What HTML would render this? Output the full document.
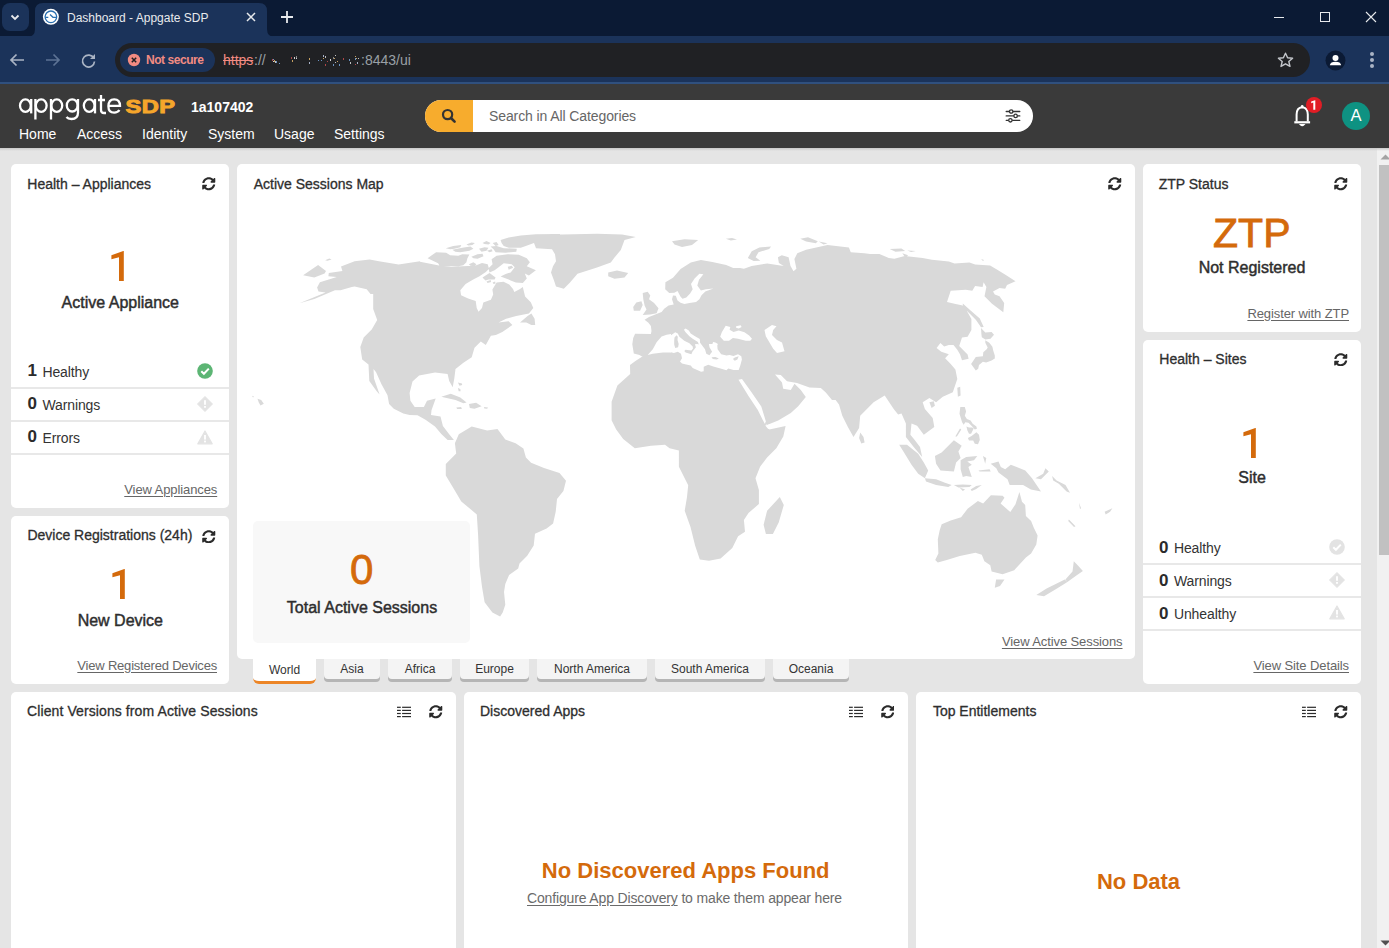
<!DOCTYPE html>
<html><head><meta charset="utf-8">
<style>
*{margin:0;padding:0;box-sizing:border-box}
html,body{width:1389px;height:948px;overflow:hidden;background:#e5e5e5;font-family:"Liberation Sans",sans-serif;position:relative}
.a{position:absolute}
.t{position:absolute;white-space:nowrap;line-height:1}
.card{position:absolute;background:#fff;border-radius:5px}
.ttl{position:absolute;white-space:nowrap;line-height:1;font-size:14px;color:#2e2e2e;-webkit-text-stroke:0.3px #2e2e2e}
.big{position:absolute;white-space:nowrap;line-height:1;color:#d46a0b;text-align:center;-webkit-text-stroke:0.8px #d46a0b}
.sub{position:absolute;white-space:nowrap;line-height:1;color:#2e2e2e;text-align:center;font-size:16px;-webkit-text-stroke:0.45px #2e2e2e}
.lnk{position:absolute;white-space:nowrap;line-height:1;font-size:13px;color:#666;text-decoration:underline;text-underline-offset:2px;letter-spacing:-0.1px}
.sep{position:absolute;height:2px;background:#e8e8e8}
.num{position:absolute;white-space:nowrap;line-height:1;font-size:17px;font-weight:bold;color:#2b2b2b}
.lbl{position:absolute;white-space:nowrap;line-height:1;font-size:14px;color:#333;letter-spacing:-0.1px}
.tab{position:absolute;top:659px;height:20px;background:#f4f4f4;border-radius:0 0 4px 4px;box-shadow:0 3px 0 #b5b5b5;font-size:12px;color:#333;text-align:center;line-height:1}
.tab span{position:absolute;left:0;right:0;top:4px}
</style></head><body>
<!-- ===== browser chrome ===== -->
<div class="a" style="left:0;top:0;width:1389px;height:36px;background:#0b1a34"></div>
<div class="a" style="left:0;top:36px;width:1389px;height:47px;background:#1b335a"></div>
<div class="a" style="left:0;top:82px;width:1389px;height:2px;background:#30507e"></div>
<!-- dropdown btn -->
<div class="a" style="left:2px;top:3px;width:27px;height:28px;background:#1b335a;border-radius:8px"></div>
<svg class="a" style="left:9px;top:11px" width="12" height="12" viewBox="0 0 12 12"><path d="M2.5 4.5 L6 8 L9.5 4.5" fill="none" stroke="#e8eaed" stroke-width="1.8"/></svg>
<!-- active tab -->
<svg class="a" style="left:27px;top:3px" width="250" height="34" viewBox="0 0 250 34"><path d="M0 34 Q8 34 8 26 L8 8 Q8 0 16 0 L232 0 Q240 0 240 8 L240 26 Q240 34 248 34 Z" fill="#1b335a"/></svg>
<svg class="a" style="left:42px;top:8px" width="18" height="18" viewBox="42 8 18 18"><circle cx="50.9" cy="16.8" r="8" fill="#fff"/><circle cx="50.9" cy="16.8" r="5.8" fill="none" stroke="#2a6fb0" stroke-width="1.3"/><path d="M45.3,17.3H48.3M50,14.6L53,17.3H56.5" fill="none" stroke="#2a6fb0" stroke-width="1.3"/></svg>
<div class="t" style="left:67px;top:12px;font-size:12px;color:#e8eaed">Dashboard - Appgate SDP</div>
<svg class="a" style="left:246px;top:12px" width="10" height="10" viewBox="0 0 10 10"><path d="M1 1L9 9M9 1L1 9" stroke="#e8eaed" stroke-width="1.5"/></svg>
<svg class="a" style="left:280px;top:10px" width="14" height="14" viewBox="0 0 14 14"><path d="M7 1V13M1 7H13" stroke="#e8eaed" stroke-width="1.8"/></svg>
<!-- window controls -->
<div class="a" style="left:1274px;top:17px;width:10px;height:1px;background:#e8eaed"></div>
<div class="a" style="left:1320px;top:12px;width:10px;height:10px;border:1px solid #e8eaed"></div>
<svg class="a" style="left:1365px;top:11px" width="12" height="12" viewBox="0 0 12 12"><path d="M1 1L11 11M11 1L1 11" stroke="#e8eaed" stroke-width="1.1"/></svg>
<!-- nav buttons -->
<svg class="a" style="left:8px;top:52px" width="18" height="16" viewBox="0 0 18 16"><path d="M16 8H3M8.5 2.5L3 8L8.5 13.5" fill="none" stroke="#aab4c4" stroke-width="1.7"/></svg>
<svg class="a" style="left:44px;top:52px" width="18" height="16" viewBox="0 0 18 16"><path d="M2 8H15M9.5 2.5L15 8L9.5 13.5" fill="none" stroke="#5d7394" stroke-width="1.7"/></svg>
<svg class="a" style="left:80px;top:52px" width="17" height="17" viewBox="0 0 17 17"><path d="M13.8 6.2A6 6 0 1 0 14.5 9.5" fill="none" stroke="#aab4c4" stroke-width="1.7"/><path d="M15 2V7H10Z" fill="#aab4c4"/></svg>
<!-- omnibox -->
<div class="a" style="left:115px;top:43px;width:1195px;height:34px;background:#202124;border-radius:17px"></div>
<div class="a" style="left:120px;top:48px;width:95px;height:24px;background:#1b335a;border-radius:12px"></div>
<svg class="a" style="left:127px;top:53px" width="14" height="14" viewBox="0 0 14 14"><circle cx="7" cy="7" r="6.2" fill="#f28b82"/><path d="M4.8 4.8L9.2 9.2M9.2 4.8L4.8 9.2" stroke="#202124" stroke-width="1.5"/></svg>
<div class="t" style="left:146px;top:54px;font-size:12px;font-weight:bold;color:#f28b82;letter-spacing:-0.45px">Not secure</div>
<div class="t" style="left:223px;top:53px;font-size:14px;color:#f28b82;text-decoration:line-through">https</div>
<div class="t" style="left:254px;top:53px;font-size:14px;color:#9aa0a6">://</div>
<div class="a" style="left:292px;top:60px;width:1px;height:2px;background:#f0c070;opacity:0.8"></div><div class="a" style="left:325px;top:56px;width:1px;height:2px;background:#e8e8e8;opacity:0.8"></div><div class="a" style="left:294px;top:57px;width:1px;height:2px;background:#ffffff;opacity:0.8"></div><div class="a" style="left:318px;top:60px;width:1px;height:1px;background:#7fb0e8;opacity:0.8"></div><div class="a" style="left:291px;top:57px;width:1px;height:2px;background:#d05050;opacity:0.8"></div><div class="a" style="left:335px;top:62px;width:1px;height:1px;background:#e8e8e8;opacity:0.8"></div><div class="a" style="left:337px;top:61px;width:1px;height:1px;background:#f0c070;opacity:0.8"></div><div class="a" style="left:343px;top:58px;width:1px;height:2px;background:#d05050;opacity:0.8"></div><div class="a" style="left:333px;top:64px;width:1px;height:2px;background:#7fb0e8;opacity:0.8"></div><div class="a" style="left:355px;top:56px;width:1px;height:1px;background:#f0c070;opacity:0.8"></div><div class="a" style="left:274px;top:60px;width:1px;height:2px;background:#f0c070;opacity:0.8"></div><div class="a" style="left:339px;top:64px;width:1px;height:2px;background:#7fb0e8;opacity:0.8"></div><div class="a" style="left:321px;top:60px;width:1px;height:1px;background:#7fb0e8;opacity:0.8"></div><div class="a" style="left:350px;top:62px;width:1px;height:2px;background:#e8e8e8;opacity:0.8"></div><div class="a" style="left:357px;top:62px;width:1px;height:2px;background:#c9d6f0;opacity:0.8"></div><div class="a" style="left:355px;top:64px;width:1px;height:1px;background:#d05050;opacity:0.8"></div><div class="a" style="left:333px;top:57px;width:1px;height:2px;background:#a0a0a0;opacity:0.8"></div><div class="a" style="left:296px;top:56px;width:1px;height:2px;background:#a0a0a0;opacity:0.8"></div><div class="a" style="left:279px;top:63px;width:1px;height:1px;background:#7fb0e8;opacity:0.8"></div><div class="a" style="left:273px;top:59px;width:1px;height:1px;background:#7fb0e8;opacity:0.8"></div><div class="a" style="left:275px;top:61px;width:1px;height:2px;background:#e8e8e8;opacity:0.8"></div><div class="a" style="left:334px;top:58px;width:1px;height:1px;background:#f0c070;opacity:0.8"></div><div class="a" style="left:358px;top:58px;width:1px;height:1px;background:#e8e8e8;opacity:0.8"></div><div class="a" style="left:323px;top:55px;width:1px;height:2px;background:#c9d6f0;opacity:0.8"></div><div class="a" style="left:296px;top:58px;width:1px;height:1px;background:#ffffff;opacity:0.8"></div><div class="a" style="left:356px;top:58px;width:1px;height:1px;background:#f0c070;opacity:0.8"></div><div class="a" style="left:349px;top:59px;width:1px;height:2px;background:#7fb0e8;opacity:0.8"></div><div class="a" style="left:327px;top:61px;width:1px;height:1px;background:#d05050;opacity:0.8"></div><div class="a" style="left:325px;top:64px;width:1px;height:2px;background:#d05050;opacity:0.8"></div><div class="a" style="left:309px;top:62px;width:1px;height:2px;background:#c9d6f0;opacity:0.8"></div><div class="a" style="left:309px;top:58px;width:1px;height:2px;background:#f0c070;opacity:0.8"></div><div class="a" style="left:272px;top:59px;width:1px;height:2px;background:#d05050;opacity:0.8"></div><div class="a" style="left:273px;top:61px;width:1px;height:1px;background:#ffffff;opacity:0.8"></div><div class="a" style="left:276px;top:61px;width:1px;height:2px;background:#7fb0e8;opacity:0.8"></div><div class="a" style="left:330px;top:59px;width:1px;height:2px;background:#ffffff;opacity:0.8"></div><div class="a" style="left:335px;top:55px;width:1px;height:1px;background:#e8e8e8;opacity:0.8"></div><div class="a" style="left:355px;top:58px;width:1px;height:2px;background:#7fb0e8;opacity:0.8"></div><div class="a" style="left:323px;top:58px;width:1px;height:1px;background:#f0c070;opacity:0.8"></div>
<div class="t" style="left:361px;top:53px;font-size:14px;color:#9aa0a6">:8443/ui</div>
<svg class="a" style="left:1277px;top:52px" width="17" height="16" viewBox="0 0 17 16"><path d="M8.5 1.2L10.6 5.8L15.6 6.2L11.8 9.5L13 14.4L8.5 11.8L4 14.4L5.2 9.5L1.4 6.2L6.4 5.8Z" fill="none" stroke="#c4c7cc" stroke-width="1.4" stroke-linejoin="round"/></svg>
<svg class="a" style="left:1325px;top:50px" width="21" height="21" viewBox="0 0 21 21"><circle cx="10.5" cy="10.5" r="10" fill="#0b1a34"/><circle cx="10.5" cy="8" r="3" fill="#fff"/><path d="M4.8 15.2Q5.5 11.8 10.5 11.8Q15.5 11.8 16.2 15.2Z" fill="#fff"/></svg>
<div class="a" style="left:1370px;top:52px;width:4px;height:4px;border-radius:2px;background:#aab4c4"></div>
<div class="a" style="left:1370px;top:58px;width:4px;height:4px;border-radius:2px;background:#aab4c4"></div>
<div class="a" style="left:1370px;top:64px;width:4px;height:4px;border-radius:2px;background:#aab4c4"></div>

<!-- ===== app header ===== -->
<div class="a" style="left:0;top:84px;width:1389px;height:64px;background:#3a3a3a"></div>
<!-- logo -->
<svg class="a" style="left:17px;top:92px" width="162" height="30" viewBox="17 92 162 30">
 <g fill="none" stroke="#fff" stroke-width="2.3">
  <ellipse cx="25.4" cy="105.6" rx="5.4" ry="6.3"/><path d="M31.2 99V113.4"/>
  <ellipse cx="41.2" cy="105.6" rx="5.4" ry="6.3"/><path d="M35.4 99V119.5"/>
  <ellipse cx="56.8" cy="105.6" rx="5.4" ry="6.3"/><path d="M51 99V119.5"/>
  <ellipse cx="72.2" cy="105.4" rx="5.4" ry="6.1"/><path d="M78 99V112.5Q78 119 71.5 119Q68 119 66.5 117"/>
  <ellipse cx="89.2" cy="105.6" rx="5.4" ry="6.3"/><path d="M95 99V113.4"/>
  <path d="M101 95V110Q101 113 104 113H106M98 100H105"/>
  <path d="M108.5 105.8H120Q120 99.3 114.2 99.3Q108.4 99.3 108.4 106.2Q108.4 112.6 114.2 112.6Q117.8 112.6 119.4 110"/>
 </g>
 <text x="125.5" y="112.6" font-family="Liberation Sans" font-weight="bold" font-size="17.8" fill="#f5a62b" stroke="#f5a62b" stroke-width="0.9" transform="translate(125.5 0) scale(1.33 1) translate(-125.5 0)" letter-spacing="0.3">SDP</text>
</svg>
<div class="t" style="left:191px;top:100px;font-size:14px;font-weight:bold;color:#fff">1a107402</div>
<div class="t" style="left:19px;top:127px;font-size:14px;color:#fff">Home</div>
<div class="t" style="left:77px;top:127px;font-size:14px;color:#fff">Access</div>
<div class="t" style="left:142px;top:127px;font-size:14px;color:#fff">Identity</div>
<div class="t" style="left:208px;top:127px;font-size:14px;color:#fff">System</div>
<div class="t" style="left:274px;top:127px;font-size:14px;color:#fff">Usage</div>
<div class="t" style="left:334px;top:127px;font-size:14px;color:#fff">Settings</div>
<!-- search -->
<div class="a" style="left:425px;top:100px;width:608px;height:32px;background:#fff;border-radius:16px;overflow:hidden"><div class="a" style="left:0;top:0;width:48px;height:32px;background:#f7ac2d"></div></div>
<svg class="a" style="left:441px;top:108px" width="16" height="16" viewBox="0 0 16 16"><circle cx="6.6" cy="6.6" r="4.6" fill="none" stroke="#333" stroke-width="2.2"/><path d="M10 10L13.6 13.6" stroke="#333" stroke-width="2.6" stroke-linecap="round"/></svg>
<div class="t" style="left:489px;top:109px;font-size:14px;color:#666;letter-spacing:-0.1px">Search in All Categories</div>
<svg class="a" style="left:1004px;top:108px" width="18" height="17" viewBox="0 0 18 17"><g stroke="#333" stroke-width="1.3" fill="#fff" stroke-linecap="round"><path d="M2.2 3.5H15.8M2.2 7.9H15.8M2.2 12.3H15.8"/><circle cx="7.2" cy="3.5" r="1.7"/><circle cx="11.6" cy="7.9" r="1.7"/><circle cx="6.4" cy="12.3" r="1.7"/></g></svg>
<!-- bell -->
<svg class="a" style="left:1290px;top:100px" width="24" height="30" viewBox="1290 100 24 30"><path d="M1296.6,121.5V114.5Q1296.6,107.6 1302.2,107.2Q1307.8,107.6 1307.8,114.5V121.5" fill="none" stroke="#fff" stroke-width="2"/><path d="M1294.3,122.3H1310.1" stroke="#fff" stroke-width="2.2"/><path d="M1300.3,124.6Q1302.2,126.6 1304.1,124.6Z" fill="#fff" stroke="#fff" stroke-width="1.2"/><circle cx="1302.2" cy="106.3" r="1.3" fill="#fff"/></svg>
<div class="a" style="left:1306px;top:97px;width:16px;height:16px;border-radius:8px;background:#e11d25"></div>
<svg class="a" style="left:1306px;top:97px" width="16" height="16" viewBox="0 0 16 16"><path d="M9.3,3.2V12.8H7.3V5.6L5.2,6.3V4.6L9,3.2Z" fill="#fff"/></svg>
<div class="a" style="left:1342px;top:102px;width:28px;height:28px;border-radius:14px;background:#0e9282"></div>
<div class="t" style="left:1342px;top:107px;width:28px;text-align:center;font-size:16.5px;color:#fff">A</div>

<!-- ===== scrollbar ===== -->
<div class="a" style="left:1377px;top:148px;width:12px;height:800px;background:#f1f1f1"></div>
<div class="a" style="left:1379px;top:165px;width:10px;height:390px;background:#c1c1c1"></div>
<svg class="a" style="left:1380px;top:154px" width="9" height="6" viewBox="0 0 9 6"><path d="M0.5 5.5L5.5 0.5L10.5 5.5Z" fill="#a3a3a3"/></svg>
<svg class="a" style="left:1380px;top:940px" width="9" height="6" viewBox="0 0 9 6"><path d="M0.5 0.5L5.5 5.5L10.5 0.5Z" fill="#505050"/></svg>

<div class="a" style="left:0;top:148px;width:1389px;height:3px;background:linear-gradient(#c9c9c9,rgba(229,229,229,0))"></div>
<!-- ===== cards ===== -->
<div class="card" style="left:11px;top:164px;width:218px;height:344px"></div>
<div class="card" style="left:11px;top:516px;width:218px;height:168px"></div>
<div class="card" style="left:237px;top:164px;width:898px;height:495px"></div>
<div class="card" style="left:1143px;top:164px;width:218px;height:168px"></div>
<div class="card" style="left:1143px;top:340px;width:218px;height:344px"></div>
<div class="card" style="left:11px;top:692px;width:445px;height:270px"></div>
<div class="card" style="left:464px;top:692px;width:444px;height:270px"></div>
<div class="card" style="left:916px;top:692px;width:445px;height:270px"></div>

<!--CONTENT-->
<div class="ttl" style="left:27.3px;top:177.1px;">Health – Appliances</div>
<svg class="a" style="left:202.1px;top:177.4px" width="13.5" height="13.5" viewBox="0 0 512 512"><path fill="#2b2b2b" d="M370.72 133.28C339.458 104.008 298.888 87.962 255.848 88c-77.458.068-144.328 53.178-162.791 126.85-1.344 5.363-6.122 9.15-11.651 9.15H24.103c-7.498 0-13.194-6.807-11.807-14.176C33.933 94.924 134.813 8 256 8c66.448 0 126.791 26.136 171.315 68.685L463.03 40.97C478.149 25.851 504 36.559 504 57.941V192c0 13.255-10.745 24-24 24H345.941c-21.382 0-32.09-25.851-16.971-40.971l41.75-41.749zM32 296h134.059c21.382 0 32.09 25.851 16.971 40.971l-41.75 41.75c31.262 29.273 71.835 45.319 114.876 45.28 77.418-.07 144.315-53.144 162.787-126.849 1.344-5.363 6.122-9.15 11.651-9.15h57.304c7.498 0 13.194 6.807 11.807 14.176C478.067 417.076 377.187 504 256 504c-66.448 0-126.791-26.136-171.315-68.685L48.97 471.03C33.851 486.149 8 475.441 8 454.059V320c0-13.255 10.745-24 24-24z"/></svg>
<svg class="a" style="left:110.0px;top:250.0px" width="16" height="32" viewBox="110 250 16 32"><path fill="#d46a0b" d="M123.8,250.9V280.9H119V257.2L111.4,259.3V255.2L123.3,250.9Z"/></svg>
<div class="sub" style="left:-29.7px;top:294.5px;width:300px;font-size:16px;">Active Appliance</div>
<div class="num" style="left:27.5px;top:362.4px;">1</div>
<div class="lbl" style="left:42.4px;top:364.9px;">Healthy</div>
<svg class="a" style="left:197px;top:363.1px" width="16" height="16" viewBox="0 0 16 16"><circle cx="8" cy="8" r="7.8" fill="#5cb574"/><path d="M4.3 8.2L6.9 10.8L11.8 5.6" fill="none" stroke="#fff" stroke-width="2"/></svg>
<div class="num" style="left:27.5px;top:395.4px;">0</div>
<div class="lbl" style="left:42.4px;top:397.9px;">Warnings</div>
<svg class="a" style="left:197px;top:396.1px" width="16" height="16" viewBox="0 0 16 16"><path d="M8 0.5L15.5 8L8 15.5L0.5 8Z" fill="#e3e3e3" stroke="#e3e3e3" stroke-linejoin="round" stroke-width="1"/><rect x="7.1" y="4.2" width="1.8" height="4.6" fill="#fff"/><rect x="7.1" y="10" width="1.8" height="1.8" fill="#fff"/></svg>
<div class="num" style="left:27.5px;top:428.4px;">0</div>
<div class="lbl" style="left:42.4px;top:430.9px;">Errors</div>
<svg class="a" style="left:197px;top:429.6px" width="16" height="15" viewBox="0 0 16 15"><path d="M8 1L15.2 13.8H0.8Z" fill="#e3e3e3" stroke="#e3e3e3" stroke-linejoin="round" stroke-width="1.2"/><rect x="7.1" y="5" width="1.8" height="4.6" fill="#fff"/><rect x="7.1" y="10.6" width="1.8" height="1.8" fill="#fff"/></svg>
<div class="sep" style="left:11px;top:386.5px;width:218px"></div>
<div class="sep" style="left:11px;top:420px;width:218px"></div>
<div class="sep" style="left:11px;top:453px;width:218px"></div>
<div class="lnk" style="right:1171.8px;top:482.6px;">View Appliances</div>
<div class="ttl" style="left:27.4px;top:528.1px;">Device Registrations (24h)</div>
<svg class="a" style="left:202.1px;top:529.5px" width="13.5" height="13.5" viewBox="0 0 512 512"><path fill="#2b2b2b" d="M370.72 133.28C339.458 104.008 298.888 87.962 255.848 88c-77.458.068-144.328 53.178-162.791 126.85-1.344 5.363-6.122 9.15-11.651 9.15H24.103c-7.498 0-13.194-6.807-11.807-14.176C33.933 94.924 134.813 8 256 8c66.448 0 126.791 26.136 171.315 68.685L463.03 40.97C478.149 25.851 504 36.559 504 57.941V192c0 13.255-10.745 24-24 24H345.941c-21.382 0-32.09-25.851-16.971-40.971l41.75-41.749zM32 296h134.059c21.382 0 32.09 25.851 16.971 40.971l-41.75 41.75c31.262 29.273 71.835 45.319 114.876 45.28 77.418-.07 144.315-53.144 162.787-126.849 1.344-5.363 6.122-9.15 11.651-9.15h57.304c7.498 0 13.194 6.807 11.807 14.176C478.067 417.076 377.187 504 256 504c-66.448 0-126.791-26.136-171.315-68.685L48.97 471.03C33.851 486.149 8 475.441 8 454.059V320c0-13.255 10.745-24 24-24z"/></svg>
<svg class="a" style="left:110.7px;top:568.3px" width="16" height="32" viewBox="110 250 16 32"><path fill="#d46a0b" d="M123.8,250.9V280.9H119V257.2L111.4,259.3V255.2L123.3,250.9Z"/></svg>
<div class="sub" style="left:-29.7px;top:612.5px;width:300px;font-size:16px;">New Device</div>
<div class="lnk" style="right:1172.0px;top:658.6px;letter-spacing:-0.2px">View Registered Devices</div>
<div class="ttl" style="left:253.7px;top:177.3px;">Active Sessions Map</div>
<svg class="a" style="left:1108.2px;top:177.2px" width="13.5" height="13.5" viewBox="0 0 512 512"><path fill="#2b2b2b" d="M370.72 133.28C339.458 104.008 298.888 87.962 255.848 88c-77.458.068-144.328 53.178-162.791 126.85-1.344 5.363-6.122 9.15-11.651 9.15H24.103c-7.498 0-13.194-6.807-11.807-14.176C33.933 94.924 134.813 8 256 8c66.448 0 126.791 26.136 171.315 68.685L463.03 40.97C478.149 25.851 504 36.559 504 57.941V192c0 13.255-10.745 24-24 24H345.941c-21.382 0-32.09-25.851-16.971-40.971l41.75-41.749zM32 296h134.059c21.382 0 32.09 25.851 16.971 40.971l-41.75 41.75c31.262 29.273 71.835 45.319 114.876 45.28 77.418-.07 144.315-53.144 162.787-126.849 1.344-5.363 6.122-9.15 11.651-9.15h57.304c7.498 0 13.194 6.807 11.807 14.176C478.067 417.076 377.187 504 256 504c-66.448 0-126.791-26.136-171.315-68.685L48.97 471.03C33.851 486.149 8 475.441 8 454.059V320c0-13.255 10.745-24 24-24z"/></svg>
<svg class="a" style="left:0;top:0" width="1389" height="948" viewBox="0 0 1389 948"><path fill="#d9d9d9" d="M341.0,266.4 354.6,261.2 369.6,259.4 378.9,261.2 398.6,264.5 420.0,261.2 420.0,261.7 439.0,265.5 451.6,266.8 468.1,266.1 475.7,265.5 482.0,263.0 487.7,264.2 489.0,268.7 485.8,272.1 479.5,276.3 473.2,279.4 465.6,283.9 460.3,290.2 461.1,295.3 468.1,298.4 475.7,300.9 476.7,307.9 478.5,311.7 482.0,307.9 483.3,302.5 490.9,299.7 493.2,294.6 492.4,289.6 496.6,282.6 503.5,281.7 509.2,284.5 513.0,288.9 514.3,292.1 520.0,288.9 522.8,287.0 525.1,296.5 530.8,302.2 533.3,307.9 528.9,313.6 516.2,316.1 506.1,318.7 498.5,322.5 508.6,321.2 512.4,325.0 502.3,332.0 495.9,335.1 490.9,335.8 485.8,345.0 480.8,341.4 474.5,347.8 471.7,357.3 463.4,362.8 455.5,369.1 454.3,378.6 452.7,387.3 449.2,381.0 447.6,373.9 435.0,372.6 419.1,375.5 412.5,381.5 409.6,392.9 410.4,400.8 414.7,407.1 423.9,407.1 427.0,400.8 435.7,398.4 431.5,410.3 431.0,415.0 440.5,416.6 442.9,426.1 449.2,434.3 453.9,440.0 447.6,440.0 441.3,434.0 435.0,426.4 425.5,419.8 417.5,415.3 409.6,415.0 403.3,413.4 393.8,408.7 389.1,403.9 387.5,395.2 381.5,384.2 376.1,372.3 373.5,369.1 374.0,378.6 379.6,394.4 376.7,391.3 369.3,381.0 368.5,364.4 362.2,359.6 360.3,347.0 363.7,337.5 371.7,329.6 377.2,320.1 373.2,309.0 373.2,294.0 370.5,294.0 366.7,289.3 354.6,286.5 351.8,287.0 340.5,290.2 334.9,290.2 314.3,299.1 299.4,303.3 325.6,292.6 318.5,291.6 317.1,287.4 319.9,282.3 336.8,277.1 328.4,276.2 328.8,272.9 342.4,271.1ZM303.1,275.3 318.1,265.0 326.0,271.1 324.6,273.4 314.3,277.6ZM325.1,260.3 329.3,258.4 331.6,259.4 327.4,260.8ZM520.0,322.5 527.6,316.1 531.4,313.6 534.6,318.7 535.2,325.0 531.4,325.0 526.3,322.5ZM534.0,235.0 562.5,234.5 597.0,233.8 622.0,234.5 635.8,237.0 624.5,240.0 620.8,250.0 614.5,257.5 610.8,262.5 597.0,267.5 577.5,273.8 570.0,282.5 563.8,288.8 556.0,286.5 554.0,280.5 551.0,272.5 553.0,266.2 556.0,261.2 555.0,254.2 552.0,249.2 536.0,248.2 534.0,243.0ZM608.2,272.5 617.0,270.5 628.2,273.0 624.5,277.5 614.5,278.8 608.2,276.2ZM252.0,395.8 254.0,396.5 253.0,397.5ZM257.5,398.8 261.2,400.0 263.8,403.8 260.5,405.5 258.8,402.5ZM445.8,464.0 456.2,453.6 454.9,443.3 458.8,434.3 471.7,426.5 487.2,430.4 497.5,429.1 505.3,439.4 515.6,443.3 523.4,448.5 525.9,457.5 531.1,462.7 544.0,467.9 559.5,473.0 566.0,480.8 563.4,491.1 557.0,498.9 555.7,511.8 553.1,523.4 546.6,528.6 535.0,533.7 533.7,545.4 527.2,555.7 519.5,563.5 518.2,568.6 509.1,575.1 505.3,584.1 504.0,591.9 505.3,604.8 502.7,612.6 500.1,616.4 492.4,612.6 484.6,602.2 482.0,586.7 479.4,566.0 478.1,535.0 476.8,514.4 461.3,501.4 453.6,488.5 445.8,475.6ZM690.8,262.6 700.9,260.1 712.3,262.0 726.2,265.1 733.2,268.0 740.0,267.9 743.9,268.8 751.7,265.9 767.2,263.4 783.7,265.9 778.9,263.0 777.9,257.2 781.8,255.2 788.6,257.2 790.5,265.9 793.5,271.2 796.4,268.8 794.4,259.1 797.3,253.3 806.1,249.8 827.5,245.1 848.9,247.4 850.8,252.3 864.4,253.3 870.0,254.1 879.4,254.1 888.8,257.9 894.4,258.8 904.7,256.0 922.6,257.9 931.9,259.7 948.8,261.6 954.5,263.5 969.5,262.5 975.1,264.4 990.1,265.4 997.7,270.1 1007.0,275.7 1015.5,281.3 1007.0,285.1 1005.2,288.8 999.5,287.9 993.0,291.6 994.8,294.5 999.5,296.3 1004.2,302.9 1003.3,312.3 992.0,303.8 984.5,296.3 986.4,286.9 983.6,282.3 982.6,286.9 975.1,286.0 972.3,290.7 965.7,289.8 950.7,290.7 947.0,302.0 954.5,303.8 963.9,305.7 971.4,318.9 971.4,330.1 967.6,336.7 962.0,337.6 960.1,343.3 959.2,346.1 967.6,354.5 968.6,358.7 962.0,360.2 960.1,354.5 957.3,349.8 953.5,345.1 948.8,345.1 944.2,346.6 940.4,342.9 936.6,348.0 941.3,351.7 948.8,354.2 945.1,358.3 950.7,363.9 955.4,369.5 957.3,378.9 952.8,392.3 942.8,396.7 936.1,402.3 929.4,397.9 922.7,402.3 924.9,409.0 932.7,417.9 934.3,426.9 923.8,434.7 917.1,425.8 911.5,423.5 910.4,434.7 914.9,440.3 920.0,447.0 922.2,457.0 913.7,447.0 905.9,436.9 905.9,423.5 901.5,413.5 898.1,414.6 893.7,409.0 884.7,395.6 873.6,402.3 860.2,415.7 859.1,428.0 853.5,436.9 847.9,426.9 842.3,415.7 839.0,404.6 835.6,400.1 832.0,400.0 825.8,392.5 820.8,388.0 809.5,387.5 797.0,383.0 787.0,381.2 780.8,375.0 775.0,374.5 782.0,382.5 783.2,388.8 790.8,390.0 794.5,383.8 800.8,390.0 805.8,397.0 798.2,406.2 790.8,413.0 778.2,420.5 767.0,425.0 764.5,422.5 757.0,413.8 749.5,400.0 744.5,390.0 738.2,377.5 738.9,370.2 741.4,366.4 741.4,356.3 738.9,355.0 731.3,355.6 723.7,355.0 719.9,351.2 717.3,346.1 718.6,343.0 714.2,342.3 711.0,343.6 713.5,348.7 710.4,349.3 711.6,353.7 708.5,355.0 704.7,349.3 700.9,343.6 699.0,338.5 692.0,332.8 685.7,328.4 684.7,329.1 690.1,333.5 696.5,339.2 699.0,342.1 697.7,344.2 695.8,345.5 692.7,349.9 689.5,351.2 687.6,349.3 692.0,346.1 694.6,344.2 689.5,341.1 684.4,336.0 680.6,332.5 676.2,332.5 672.4,333.7 666.7,334.7 661.6,336.6 656.6,342.3 652.8,349.3 647.7,355.0 642.7,356.9 639.5,355.0 633.8,353.5 632.3,344.2 633.2,337.9 635.1,333.7 650.9,334.1 651.5,330.9 650.9,325.9 648.4,322.7 644.6,319.8 649.0,317.0 655.3,314.5 661.6,312.0 664.2,308.8 668.6,305.6 673.7,304.4 672.0,299.3 673.0,295.5 675.8,295.8 677.5,300.6 680.6,302.8 684.4,304.1 689.5,303.1 696.1,302.1 699.4,299.3 701.5,295.3 705.3,291.5 713.5,288.5 705.9,289.2 700.9,290.4 697.3,285.4 699.0,279.7 703.4,274.2 699.4,273.7 694.6,278.4 691.0,284.1 692.7,289.2 690.1,293.6 686.3,297.4 682.5,298.7 680.6,296.8 677.5,291.1 674.3,292.7 669.2,293.0 665.2,289.2 665.4,282.2 673.0,277.8 680.6,268.9ZM642.7,293.0 647.7,291.7 650.3,295.5 649.0,299.3 654.1,303.1 658.5,308.2 656.6,313.2 650.3,314.5 642.7,315.1 646.5,309.4 644.6,305.6 643.3,299.3ZM633.2,306.9 636.3,302.5 641.4,301.2 642.7,305.0 640.1,310.7 633.8,310.7ZM672.0,241.2 684.5,239.2 698.2,240.0 692.0,245.0 682.0,247.0 674.5,244.5ZM725.8,238.8 732.0,238.0 737.0,239.5 730.8,240.5ZM962.8,303.6 970.3,310.3 979.8,318.6 983.7,326.9 981.0,327.3 975.8,319.8 966.3,310.3 962.8,304.7ZM981.0,328.1 985.3,332.4 991.6,332.0 994.0,334.8 990.5,338.8 985.3,339.6 981.8,337.2 981.4,334.0ZM985.3,340.3 989.3,342.7 992.4,346.7 993.2,350.6 994.8,355.4 994.8,358.5 991.6,360.5 986.1,362.5 982.9,361.7 979.0,364.9 978.2,368.8 975.8,370.4 971.1,364.1 975.8,357.0 982.9,356.2 983.3,352.2 986.9,349.1 987.7,347.5 985.3,342.7ZM957.3,387.8 960.2,386.7 960.6,395.6 957.9,396.7ZM860.2,432.4 863.5,436.9 864.6,442.5 861.3,443.6 859.1,438.0ZM929.4,402.3 933.8,401.2 934.9,405.7 931.6,407.9ZM899.2,444.7 907.0,444.7 918.2,453.7 923.8,462.6 928.2,470.4 924.9,478.2 918.2,473.7 911.5,464.8 904.8,453.7ZM924.9,478.2 936.1,479.3 945.0,482.7 951.7,484.9 948.3,487.1 936.1,484.9 926.0,481.5ZM953.9,484.9 962.8,484.5 971.8,484.9 969.5,487.1 958.4,487.6ZM959.5,487.6 965.1,489.4 962.8,490.9ZM970.6,489.4 976.2,486.0 981.8,484.9 976.2,488.9 971.8,491.1ZM934.9,455.9 941.6,452.5 953.9,440.3 961.7,445.8 958.4,451.4 960.6,458.1 956.1,462.6 953.9,471.5 940.5,470.4 936.1,463.7ZM960.6,460.3 966.2,457.0 977.3,455.9 974.0,460.3 967.3,461.5 971.8,464.8 968.4,467.0 971.8,477.1 966.2,476.0 962.8,477.1 960.6,469.3ZM982.9,455.9 986.3,458.1 985.2,463.7ZM978.5,470.4 989.6,469.3 990.7,471.5 979.6,471.5ZM990.7,463.7 998.5,461.5 1000.8,467.0 1005.2,469.3 1010.8,464.8 1025.3,470.4 1032.0,478.2 1041.0,491.6 1030.9,489.4 1023.1,484.9 1016.4,484.9 1009.7,484.9 1007.5,479.3 998.5,472.6 996.3,468.2ZM1035.4,478.2 1043.2,473.7 1045.4,468.2 1048.8,471.5 1041.0,479.3ZM1052.1,476.0 1056.6,480.4 1065.5,484.9 1070.0,492.7 1066.6,491.6 1058.8,483.8 1053.2,480.4ZM1078.9,502.8 1081.1,508.3 1080.0,509.0ZM1068.9,519.5 1075.5,526.2 1074.0,526.9 1068.2,521.1ZM1104.6,511.7 1112.4,508.3 1110.1,511.7 1105.7,514.4ZM739.2,379.7 748.5,394.8 757.8,406.4 764.7,422.6 769.4,429.6 785.6,426.1 783.3,436.6 776.3,448.2 767.1,457.4 760.1,466.7 755.5,478.3 758.9,489.9 758.9,503.9 748.5,513.1 743.9,520.1 745.0,531.7 738.1,536.3 732.3,547.9 720.6,558.4 709.0,560.7 699.8,559.5 695.1,545.6 690.5,527.1 684.7,510.8 687.0,496.9 688.2,485.3 678.9,466.7 678.9,450.5 669.6,448.2 665.0,444.7 651.0,445.8 634.8,448.2 623.2,438.9 616.2,429.6 611.6,420.3 611.6,401.8 617.4,385.5 630.2,373.9 630.0,365.1 635.1,361.3 642.7,356.3 652.8,353.7 662.9,352.5 671.8,352.5 679.4,351.2 681.9,354.4 680.6,360.1 687.0,365.1 695.8,367.7 703.4,370.2 705.9,366.4 716.1,366.4 726.2,368.3 738.9,370.2 740.8,375.0ZM767.1,510.8 779.8,496.9 783.8,505.0 778.7,522.4 772.9,534.0 765.9,534.0 763.6,524.7ZM671.0,326.0 745.0,326.0 745.0,372.0 671.0,372.0ZM427.6,258.2 436.1,252.2 446.2,252.7 450.2,255.2 458.3,255.7 462.3,254.2 469.4,254.4 467.4,258.2 466.4,262.3 463.3,265.3 458.3,266.3 450.2,266.1 440.2,266.8 438.1,263.3ZM445.7,248.2 453.3,246.1 461.3,245.1 460.3,247.2 454.3,248.7 450.2,249.2ZM452.3,249.7 462.3,247.7 470.4,246.6 473.4,248.7 469.4,250.7 460.3,252.2 455.3,251.7ZM466.4,244.6 471.4,242.6 474.9,243.1 472.4,245.1 468.4,245.6ZM471.4,256.7 477.5,254.2 482.5,253.7 483.5,256.2 477.5,258.7 473.4,258.2ZM468.9,264.3 473.4,262.3 476.4,264.3 474.4,266.3 470.4,265.8ZM479.0,248.7 484.5,247.2 488.5,247.7 486.5,250.7 481.5,251.7ZM482.5,243.1 486.5,241.1 490.6,243.1 488.5,244.6 484.5,244.1ZM492.6,243.1 496.6,242.1 498.6,245.1 495.6,246.1ZM487.0,250.7 491.6,249.2 492.6,251.2 489.5,252.2ZM490.6,246.6 496.6,246.1 503.7,248.2 516.8,248.7 516.3,251.7 505.7,252.7 495.6,252.2 493.6,249.2ZM500.6,240.1 508.7,237.6 520.8,235.6 535.9,234.2 560.0,234.0 560.0,237.6 546.0,240.1 533.9,243.1 525.8,246.1 520.8,247.7 508.7,247.7 503.7,246.1 501.6,243.1ZM491.6,259.2 496.6,255.7 507.7,254.2 518.8,254.7 526.8,258.2 529.9,262.3 526.8,266.3 535.9,270.3 528.9,275.4 524.8,273.4 526.8,278.4 522.8,282.9 515.8,282.4 510.7,280.4 500.6,276.4 505.7,273.9 510.7,272.4 514.7,267.3 511.7,264.3 503.7,263.3 498.6,267.3 494.6,270.3 489.5,272.4 488.5,268.3 492.6,264.3ZM482.5,277.4 489.5,272.9 495.6,277.4 494.6,279.4 488.5,279.4 485.5,280.4ZM486.5,281.4 490.6,279.9 491.1,281.9 487.5,282.9ZM492.6,282.4 495.1,281.4 495.6,283.4 493.6,283.9ZM507.7,266.8 511.7,265.8 513.2,267.8 508.7,269.8ZM747.8,258.1 751.7,251.3 759.4,247.4 771.1,246.5 769.2,249.0 758.5,252.3 755.6,257.2 760.4,260.7 753.6,261.0ZM800.3,238.7 808.0,237.3 817.8,241.2 815.8,243.2 806.1,241.6ZM818.7,241.6 827.5,243.2 823.6,244.5ZM889.7,249.0 901.4,248.4 905.2,250.9 895.5,251.7ZM907.2,250.4 915.9,250.9 911.1,251.9ZM902.3,253.3 908.2,255.2 905.2,257.2ZM981.1,259.1 984.0,260.1 983.0,261.0ZM960.3,406.9 964.8,406.9 966.1,411.6 964.8,415.8 966.9,419.0 970.6,420.6 972.7,423.7 976.4,426.4 976.9,428.7 974.8,429.5 972.2,426.4 968.5,422.7 965.3,422.2 963.7,424.8 962.1,422.2 959.5,413.7ZM966.4,426.4 969.0,427.4 972.2,427.4 973.7,428.5 972.7,430.6 971.1,433.8 969.0,433.8 967.4,430.6ZM967.9,438.0 971.6,435.9 976.4,432.2 979.0,434.8 979.8,440.1 978.0,444.3 974.8,443.8 973.2,440.6 969.0,440.6ZM955.3,436.4 960.0,428.5 961.3,429.5 956.9,436.4ZM441.3,396.8 450.8,393.7 460.3,397.6 466.6,402.4 463.4,403.2 455.5,400.0 444.4,397.6ZM469.0,403.9 476.1,402.7 481.6,406.3 474.5,408.7 469.8,407.9ZM456.3,407.4 461.1,407.1 461.9,409.0 457.1,409.0ZM484.0,407.1 488.0,407.4 487.2,408.7 484.3,408.4ZM457.9,382.6 461.9,383.4 462.2,385.0 459.5,385.7ZM457.9,388.1 460.3,388.9 460.6,391.3 458.7,391.3ZM935.2,560.0 938.4,553.5 937.8,539.2 939.7,530.2 941.7,524.3 950.7,520.5 961.1,517.2 967.6,508.8 977.9,501.0 983.1,503.6 990.9,495.2 1002.6,495.8 1004.5,497.8 1000.6,503.6 1010.3,512.0 1015.5,504.3 1019.4,491.9 1022.0,501.7 1025.2,504.9 1025.9,515.9 1031.1,521.1 1033.7,527.6 1037.6,535.4 1036.3,544.4 1031.1,553.5 1025.9,557.4 1014.2,570.3 1002.6,574.2 991.6,571.6 990.3,565.2 984.4,561.3 981.8,554.8 975.4,552.8 959.8,556.1 946.8,560.0 937.8,562.6ZM1073.8,561.3 1077.7,565.2 1082.9,571.0 1076.4,575.5 1067.4,582.0 1065.4,579.4 1072.5,571.6ZM1064.8,579.4 1067.4,582.0 1057.0,588.5 1044.0,596.3 1036.3,595.0 1046.6,588.5ZM996.1,579.4 1004.5,579.4 1000.0,585.9 994.8,587.8Z"/><path fill="#fff" d="M764.5,330.0 772.0,325.0 776.5,326.2 773.2,330.0 772.0,335.0 777.0,340.0 782.0,342.5 784.5,351.2 777.0,353.0 773.2,348.8 769.5,342.5 765.8,336.2ZM738.5,379.7 742.0,379.0 750.8,391.3 761.3,406.4 765.9,421.5 764.7,423.8 757.8,409.9 748.5,396.0ZM765.2,425.4 785.6,420.8 786.8,423.8 768.2,429.1ZM670.0,335.9 675.2,332.3 677.8,333.6 679.4,336.8 684.3,340.7 689.4,343.3 692.7,346.6 693.0,348.5 691.4,350.5 685.6,349.8 684.3,351.1 685.6,352.4 691.4,354.3 692.4,351.8 695.9,347.2 694.9,344.3 697.2,344.0 698.8,344.6 697.9,342.0 692.7,338.8 689.4,336.2 685.6,332.3 683.9,329.7 685.6,328.4 688.8,330.4 690.7,333.6 694.6,335.9 699.8,339.1 700.1,342.7 705.0,349.2 706.3,353.7 709.5,355.3 710.5,353.7 712.1,351.8 709.5,347.2 708.9,344.0 712.4,344.0 713.1,342.0 715.4,342.4 717.9,344.0 717.3,345.6 717.6,349.2 721.2,354.3 726.4,355.6 729.6,355.0 733.5,356.0 738.0,354.3 741.3,356.3 741.9,359.5 740.3,365.4 738.7,369.9 733.5,369.9 728.3,368.6 726.4,370.2 720.5,368.6 714.1,366.7 708.2,364.7 703.7,366.7 703.7,371.2 701.1,371.8 692.7,367.9 690.7,365.4 686.2,364.4 682.0,363.4 680.0,361.5 682.0,358.2 681.0,353.7 677.8,351.8 673.9,353.0 670.0,352.1ZM720.2,336.8 721.8,332.3 725.7,325.8 730.3,327.1 729.6,329.7 733.5,332.0 738.7,330.4 744.5,332.3 749.1,335.6 752.0,338.8 750.3,340.7 745.8,340.7 738.0,338.8 732.9,338.1 729.0,340.7 723.8,340.7ZM736.1,326.2 740.6,325.2 741.6,327.1 738.7,328.4 736.1,327.8Z"/><path fill="#d9d9d9" d="M674.5,337.5 676.5,335.2 677.8,336.8 677.5,340.1 678.7,344.0 678.1,347.2 675.2,347.9 674.2,344.6 674.2,340.7ZM711.5,357.3 715.4,356.9 718.9,358.6 716.7,359.5 712.8,358.9ZM732.9,358.9 734.8,357.6 738.7,356.3 737.4,359.5 734.8,360.8Z"/></svg>
<div class="a" style="left:253px;top:521px;width:217px;height:122px;background:#f8f8f8;border-radius:5px"></div>
<div class="big" style="left:211.8px;top:549.4px;width:300px;font-size:42px;">0</div>
<div class="sub" style="left:212.0px;top:599.6px;width:300px;font-size:16px;">Total Active Sessions</div>
<div class="lnk" style="right:266.5px;top:634.6px;">View Active Sessions</div>
<div class="tab" style="left:253px;width:63px;background:#fff;box-shadow:none;border-bottom:3.5px solid #ec8526;height:24.7px;border-radius:0 0 6px 6px"><span style="top:5px">World</span></div>
<div class="tab" style="left:324px;width:56px"><span>Asia</span></div>
<div class="tab" style="left:388px;width:64px"><span>Africa</span></div>
<div class="tab" style="left:460px;width:69px"><span>Europe</span></div>
<div class="tab" style="left:537px;width:110px"><span>North America</span></div>
<div class="tab" style="left:655px;width:110px"><span>South America</span></div>
<div class="tab" style="left:773px;width:76px"><span>Oceania</span></div>
<div class="ttl" style="left:1158.7px;top:177.1px;">ZTP Status</div>
<svg class="a" style="left:1334.2px;top:177.3px" width="13.5" height="13.5" viewBox="0 0 512 512"><path fill="#2b2b2b" d="M370.72 133.28C339.458 104.008 298.888 87.962 255.848 88c-77.458.068-144.328 53.178-162.791 126.85-1.344 5.363-6.122 9.15-11.651 9.15H24.103c-7.498 0-13.194-6.807-11.807-14.176C33.933 94.924 134.813 8 256 8c66.448 0 126.791 26.136 171.315 68.685L463.03 40.97C478.149 25.851 504 36.559 504 57.941V192c0 13.255-10.745 24-24 24H345.941c-21.382 0-32.09-25.851-16.971-40.971l41.75-41.749zM32 296h134.059c21.382 0 32.09 25.851 16.971 40.971l-41.75 41.75c31.262 29.273 71.835 45.319 114.876 45.28 77.418-.07 144.315-53.144 162.787-126.849 1.344-5.363 6.122-9.15 11.651-9.15h57.304c7.498 0 13.194 6.807 11.807 14.176C478.067 417.076 377.187 504 256 504c-66.448 0-126.791-26.136-171.315-68.685L48.97 471.03C33.851 486.149 8 475.441 8 454.059V320c0-13.255 10.745-24 24-24z"/></svg>
<div class="big" style="left:1101.8px;top:212.6px;width:300px;font-size:41px;">ZTP</div>
<div class="sub" style="left:1102.0px;top:260.4px;width:300px;font-size:16px;">Not Registered</div>
<div class="lnk" style="right:40.0px;top:306.6px;">Register with ZTP</div>
<div class="ttl" style="left:1159.3px;top:352.1px;">Health – Sites</div>
<svg class="a" style="left:1334.2px;top:352.9px" width="13.5" height="13.5" viewBox="0 0 512 512"><path fill="#2b2b2b" d="M370.72 133.28C339.458 104.008 298.888 87.962 255.848 88c-77.458.068-144.328 53.178-162.791 126.85-1.344 5.363-6.122 9.15-11.651 9.15H24.103c-7.498 0-13.194-6.807-11.807-14.176C33.933 94.924 134.813 8 256 8c66.448 0 126.791 26.136 171.315 68.685L463.03 40.97C478.149 25.851 504 36.559 504 57.941V192c0 13.255-10.745 24-24 24H345.941c-21.382 0-32.09-25.851-16.971-40.971l41.75-41.749zM32 296h134.059c21.382 0 32.09 25.851 16.971 40.971l-41.75 41.75c31.262 29.273 71.835 45.319 114.876 45.28 77.418-.07 144.315-53.144 162.787-126.849 1.344-5.363 6.122-9.15 11.651-9.15h57.304c7.498 0 13.194 6.807 11.807 14.176C478.067 417.076 377.187 504 256 504c-66.448 0-126.791-26.136-171.315-68.685L48.97 471.03C33.851 486.149 8 475.441 8 454.059V320c0-13.255 10.745-24 24-24z"/></svg>
<svg class="a" style="left:1242.2px;top:426.5px" width="16" height="32" viewBox="110 250 16 32"><path fill="#d46a0b" d="M123.8,250.9V280.9H119V257.2L111.4,259.3V255.2L123.3,250.9Z"/></svg>
<div class="sub" style="left:1102.0px;top:470.1px;width:300px;font-size:16px;">Site</div>
<div class="num" style="left:1159.1px;top:538.6px;">0</div>
<div class="lbl" style="left:1173.9px;top:541.1px;">Healthy</div>
<svg class="a" style="left:1328.8px;top:538.9px" width="16" height="16" viewBox="0 0 16 16"><circle cx="8" cy="8" r="7.8" fill="#e3e3e3"/><path d="M4.3 8.2L6.9 10.8L11.8 5.6" fill="none" stroke="#fff" stroke-width="2"/></svg>
<div class="num" style="left:1159.1px;top:571.6px;">0</div>
<div class="lbl" style="left:1173.9px;top:574.1px;">Warnings</div>
<svg class="a" style="left:1328.8px;top:571.9px" width="16" height="16" viewBox="0 0 16 16"><path d="M8 0.5L15.5 8L8 15.5L0.5 8Z" fill="#e3e3e3" stroke="#e3e3e3" stroke-linejoin="round" stroke-width="1"/><rect x="7.1" y="4.2" width="1.8" height="4.6" fill="#fff"/><rect x="7.1" y="10" width="1.8" height="1.8" fill="#fff"/></svg>
<div class="num" style="left:1159.1px;top:604.6px;">0</div>
<div class="lbl" style="left:1173.9px;top:607.1px;">Unhealthy</div>
<svg class="a" style="left:1328.8px;top:605.4px" width="16" height="15" viewBox="0 0 16 15"><path d="M8 1L15.2 13.8H0.8Z" fill="#e3e3e3" stroke="#e3e3e3" stroke-linejoin="round" stroke-width="1.2"/><rect x="7.1" y="5" width="1.8" height="4.6" fill="#fff"/><rect x="7.1" y="10.6" width="1.8" height="1.8" fill="#fff"/></svg>
<div class="sep" style="left:1143px;top:563px;width:218px"></div>
<div class="sep" style="left:1143px;top:596px;width:218px"></div>
<div class="sep" style="left:1143px;top:629px;width:218px"></div>
<div class="lnk" style="right:40.0px;top:658.7px;">View Site Details</div>
<div class="ttl" style="left:27.0px;top:703.8px;letter-spacing:0.1px">Client Versions from Active Sessions</div>
<svg class="a" style="left:397.0px;top:706.0px" width="14" height="12" viewBox="0 0 14 12"><g fill="#2b2b2b"><rect x="0" y="0.7" width="3.8" height="1.2"/><rect x="5.1" y="0.7" width="8.9" height="1.2"/><rect x="0" y="3.8" width="3.8" height="1.2"/><rect x="5.1" y="3.8" width="8.9" height="1.2"/><rect x="0" y="6.9" width="3.8" height="1.2"/><rect x="5.1" y="6.9" width="8.9" height="1.2"/><rect x="0" y="10.0" width="3.8" height="1.2"/><rect x="5.1" y="10.0" width="8.9" height="1.2"/></g></svg>
<svg class="a" style="left:429.2px;top:705.2px" width="13.5" height="13.5" viewBox="0 0 512 512"><path fill="#2b2b2b" d="M370.72 133.28C339.458 104.008 298.888 87.962 255.848 88c-77.458.068-144.328 53.178-162.791 126.85-1.344 5.363-6.122 9.15-11.651 9.15H24.103c-7.498 0-13.194-6.807-11.807-14.176C33.933 94.924 134.813 8 256 8c66.448 0 126.791 26.136 171.315 68.685L463.03 40.97C478.149 25.851 504 36.559 504 57.941V192c0 13.255-10.745 24-24 24H345.941c-21.382 0-32.09-25.851-16.971-40.971l41.75-41.749zM32 296h134.059c21.382 0 32.09 25.851 16.971 40.971l-41.75 41.75c31.262 29.273 71.835 45.319 114.876 45.28 77.418-.07 144.315-53.144 162.787-126.849 1.344-5.363 6.122-9.15 11.651-9.15h57.304c7.498 0 13.194 6.807 11.807 14.176C478.067 417.076 377.187 504 256 504c-66.448 0-126.791-26.136-171.315-68.685L48.97 471.03C33.851 486.149 8 475.441 8 454.059V320c0-13.255 10.745-24 24-24z"/></svg>
<div class="ttl" style="left:480.0px;top:703.8px;">Discovered Apps</div>
<svg class="a" style="left:848.6px;top:705.8px" width="14" height="12" viewBox="0 0 14 12"><g fill="#2b2b2b"><rect x="0" y="0.7" width="3.8" height="1.2"/><rect x="5.1" y="0.7" width="8.9" height="1.2"/><rect x="0" y="3.8" width="3.8" height="1.2"/><rect x="5.1" y="3.8" width="8.9" height="1.2"/><rect x="0" y="6.9" width="3.8" height="1.2"/><rect x="5.1" y="6.9" width="8.9" height="1.2"/><rect x="0" y="10.0" width="3.8" height="1.2"/><rect x="5.1" y="10.0" width="8.9" height="1.2"/></g></svg>
<svg class="a" style="left:880.9px;top:705.0px" width="13.5" height="13.5" viewBox="0 0 512 512"><path fill="#2b2b2b" d="M370.72 133.28C339.458 104.008 298.888 87.962 255.848 88c-77.458.068-144.328 53.178-162.791 126.85-1.344 5.363-6.122 9.15-11.651 9.15H24.103c-7.498 0-13.194-6.807-11.807-14.176C33.933 94.924 134.813 8 256 8c66.448 0 126.791 26.136 171.315 68.685L463.03 40.97C478.149 25.851 504 36.559 504 57.941V192c0 13.255-10.745 24-24 24H345.941c-21.382 0-32.09-25.851-16.971-40.971l41.75-41.749zM32 296h134.059c21.382 0 32.09 25.851 16.971 40.971l-41.75 41.75c31.262 29.273 71.835 45.319 114.876 45.28 77.418-.07 144.315-53.144 162.787-126.849 1.344-5.363 6.122-9.15 11.651-9.15h57.304c7.498 0 13.194 6.807 11.807 14.176C478.067 417.076 377.187 504 256 504c-66.448 0-126.791-26.136-171.315-68.685L48.97 471.03C33.851 486.149 8 475.441 8 454.059V320c0-13.255 10.745-24 24-24z"/></svg>
<div class="big" style="left:485.7px;top:860.4px;width:400px;font-size:22px;font-weight:bold;-webkit-text-stroke:0">No Discovered Apps Found</div>
<div class="t" style="left:527px;top:891.4px;font-size:14px;color:#6b6b6b;letter-spacing:-0.15px"><span style="text-decoration:underline;text-underline-offset:2px">Configure App Discovery</span> to make them appear here</div>
<div class="ttl" style="left:932.9px;top:703.8px;">Top Entitlements</div>
<svg class="a" style="left:1302.0px;top:705.8px" width="14" height="12" viewBox="0 0 14 12"><g fill="#2b2b2b"><rect x="0" y="0.7" width="3.8" height="1.2"/><rect x="5.1" y="0.7" width="8.9" height="1.2"/><rect x="0" y="3.8" width="3.8" height="1.2"/><rect x="5.1" y="3.8" width="8.9" height="1.2"/><rect x="0" y="6.9" width="3.8" height="1.2"/><rect x="5.1" y="6.9" width="8.9" height="1.2"/><rect x="0" y="10.0" width="3.8" height="1.2"/><rect x="5.1" y="10.0" width="8.9" height="1.2"/></g></svg>
<svg class="a" style="left:1334.0px;top:705.0px" width="13.5" height="13.5" viewBox="0 0 512 512"><path fill="#2b2b2b" d="M370.72 133.28C339.458 104.008 298.888 87.962 255.848 88c-77.458.068-144.328 53.178-162.791 126.85-1.344 5.363-6.122 9.15-11.651 9.15H24.103c-7.498 0-13.194-6.807-11.807-14.176C33.933 94.924 134.813 8 256 8c66.448 0 126.791 26.136 171.315 68.685L463.03 40.97C478.149 25.851 504 36.559 504 57.941V192c0 13.255-10.745 24-24 24H345.941c-21.382 0-32.09-25.851-16.971-40.971l41.75-41.749zM32 296h134.059c21.382 0 32.09 25.851 16.971 40.971l-41.75 41.75c31.262 29.273 71.835 45.319 114.876 45.28 77.418-.07 144.315-53.144 162.787-126.849 1.344-5.363 6.122-9.15 11.651-9.15h57.304c7.498 0 13.194 6.807 11.807 14.176C478.067 417.076 377.187 504 256 504c-66.448 0-126.791-26.136-171.315-68.685L48.97 471.03C33.851 486.149 8 475.441 8 454.059V320c0-13.255 10.745-24 24-24z"/></svg>
<div class="big" style="left:988.5px;top:871.2px;width:300px;font-size:22px;font-weight:bold;-webkit-text-stroke:0">No Data</div>
</body></html>
